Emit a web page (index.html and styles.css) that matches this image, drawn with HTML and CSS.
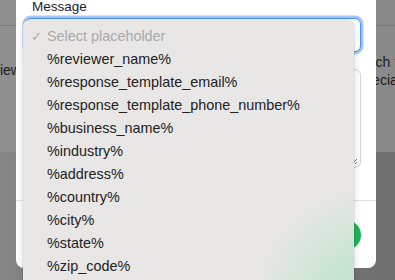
FILE: index.html
```html
<!DOCTYPE html>
<html lang="en">
<head>
    <meta charset="UTF-8">
    <title>Edit Response Template</title>
    <link rel="stylesheet" href="styles.css">
</head>
<body>

    <div class="backdrop">
        <div class="page-card">
            <div class="card-head"></div>
            <div class="card-body">
                <div class="col-left"><span>Reviews</span></div>
                <div class="col-right">
                    <p class="line-one">Search for</p>
                    <p class="line-two">Special</p>
                </div>
            </div>
        </div>
    </div>

    <div class="modal">
        <div class="modal-body">
            <label class="field-label">Message</label>
            <div class="select-box"></div>
            <div class="textarea-box">
                <svg class="grip" width="8" height="8" viewBox="0 0 8 8">
                    <path d="M7 2 L2 7 M7 5 L5 7" stroke="#777" stroke-width="1" fill="none"/>
                </svg>
            </div>
        </div>
        <div class="modal-footer">
            <button class="btn-save"></button>
        </div>
    </div>

    <ul class="menu">
        <li class="menu-item placeholder"><span class="check">✓</span>Select placeholder</li>
        <li class="menu-item">%reviewer_name%</li>
        <li class="menu-item">%response_template_email%</li>
        <li class="menu-item">%response_template_phone_number%</li>
        <li class="menu-item">%business_name%</li>
        <li class="menu-item">%industry%</li>
        <li class="menu-item">%address%</li>
        <li class="menu-item">%country%</li>
        <li class="menu-item">%city%</li>
        <li class="menu-item">%state%</li>
        <li class="menu-item">%zip_code%</li>
    </ul>

</body>
</html>
```

FILE: styles.css
```css
body {
    margin: 0;
    width: 395px;
    height: 280px;
    overflow: hidden;
    position: relative;
    font-family: 'Liberation Sans', Arial, sans-serif;
    background: linear-gradient(90deg, #858585 0%, #7b7b7b 60%, #6f6f6f 100%);
}

.backdrop {
    height: 152px;
}

.page-card {
    height: 152px;
    background: linear-gradient(90deg, #8f8f8f 0%, #8a8a8a 100%);
    overflow: hidden;
}

.card-head {
    height: 25px;
    border-bottom: 1px solid #7b7b7b;
}

.card-body {
    display: flex;
    padding-top: 27px;
    color: #1c1c1c;
    font-size: 14px;
}

.col-left {
    flex: none;
    width: 346px;
    margin-left: -25px;
    padding-top: 9px;
    white-space: nowrap;
}

.col-right {
    flex: none;
    margin-left: 1px;
    white-space: nowrap;
}

.col-right p {
    margin: 0;
    line-height: 18px;
}

.line-one {
    margin-left: 24px !important;
}

.line-two {
    margin-left: 33px !important;
}

.modal {
    position: absolute;
    left: 16px;
    top: -30px;
    width: 360px;
    height: 298px;
    background: #fff;
    border-radius: 8px;
    display: flex;
    flex-direction: column;
}

.modal-body {
    padding: 29px 15px 0 9px;
}

.field-label {
    display: block;
    margin-left: 7px;
    font-size: 13.5px;
    line-height: 16px;
    color: #1d1d1f;
}

.select-box {
    margin-top: 3px;
    height: 34px;
    border: 1px solid #4d8ff0;
    border-radius: 6px;
    box-shadow: 0 0 0 2.5px #a8c7f6;
    box-sizing: border-box;
    background: #fff;
}

.textarea-box {
    margin-top: 17px;
    height: 99px;
    border: 1px solid #d3d8e0;
    border-radius: 6px;
    box-sizing: border-box;
    position: relative;
}

.grip {
    position: absolute;
    right: 2px;
    bottom: 2px;
}

.modal-footer {
    margin-top: 32px;
    border-top: 1px solid #dde1e8;
    padding: 19px 15px 0 9px;
    display: flex;
    justify-content: flex-end;
}

.btn-save {
    width: 90px;
    height: 30px;
    border: none;
    border-radius: 15px;
    background: #1fb45c;
}

.menu {
    position: absolute;
    left: 23px;
    top: 20px;
    width: 331px;
    height: 290px;
    margin: 0;
    padding: 5px 0 0;
    list-style: none;
    box-sizing: border-box;
    border-radius: 6px 6px 0 0;
    background:
        radial-gradient(circle at 350px 285px, #bcdfc8 0, #c8e4d2 50px, rgba(232, 231, 229, 0) 120px),
        #e8e7e5;
    box-shadow: 0 0 0 0.5px rgba(0, 0, 0, 0.12), 0 3px 10px rgba(0, 0, 0, 0.12);
}

.menu-item {
    position: relative;
    height: 23px;
    line-height: 23px;
    padding-left: 24px;
    font-size: 14.4px;
    color: #222;
    white-space: nowrap;
}

.placeholder {
    color: #a9a9a9;
}

.check {
    position: absolute;
    left: 8px;
    font-size: 13px;
}
```
